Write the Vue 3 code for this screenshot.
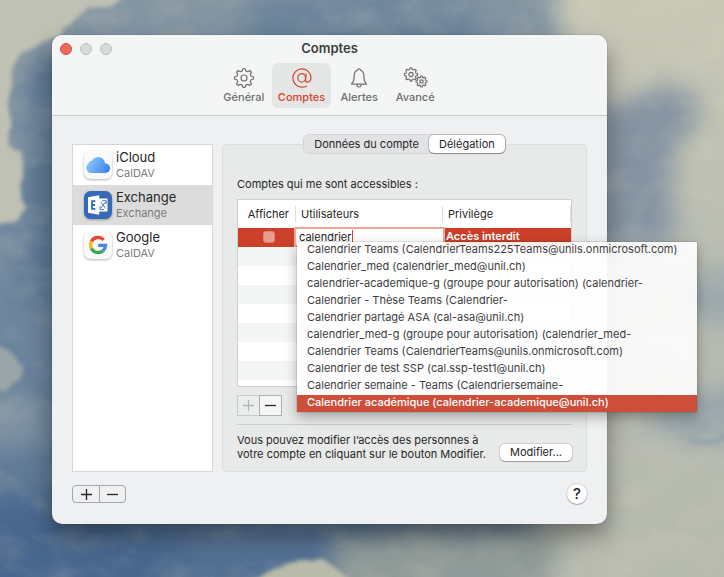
<script setup>
import { ref } from 'vue'

const gearPath = (cx, cy, r, teeth) => {
  const step = (Math.PI * 2) / teeth
  const inner = r * 0.8
  const point = (radius, angle) =>
    `${(cx + radius * Math.sin(angle)).toFixed(2)} ${(cy - radius * Math.cos(angle)).toFixed(2)}`
  let d = ''
  for (let i = 0; i < teeth; i++) {
    const a = i * step
    d += `${i ? 'L' : 'M'}${point(inner, a - step * 0.3)}`
    d += `L${point(r, a - step * 0.17)}`
    d += `Q${point(r * 1.04, a)} ${point(r, a + step * 0.17)}`
    d += `L${point(inner, a + step * 0.3)}`
    d += `Q${point(inner * 0.94, a + step * 0.5)} ${point(inner, a + step * 0.7)}`
  }
  return d + 'Z'
}

const gear = gearPath(12, 12, 9.3, 8)
const gearLarge = gearPath(8, 8.5, 6.6, 8)
const gearSmall = gearPath(18.5, 15.5, 5.4, 8)

const sections = [
  { id: 'general', label: 'Général' },
  { id: 'comptes', label: 'Comptes' },
  { id: 'alertes', label: 'Alertes' },
  { id: 'avance', label: 'Avancé' },
]
const section = ref('comptes')

const accounts = [
  { id: 'icloud', name: 'iCloud', kind: 'CalDAV' },
  { id: 'exchange', name: 'Exchange', kind: 'Exchange' },
  { id: 'google', name: 'Google', kind: 'CalDAV' },
]
const account = ref('exchange')

const tabs = ['Données du compte', 'Délégation']
const tab = ref('Délégation')

const query = ref('calendrier')
const suggestions = [
  'Calendrier Teams (CalendrierTeams225Teams@unils.onmicrosoft.com)',
  'Calendrier_med (calendrier_med@unil.ch)',
  'calendrier-academique-g (groupe pour autorisation) (calendrier-',
  'Calendrier - Thèse Teams (Calendrier-',
  'Calendrier partagé ASA (cal-asa@unil.ch)',
  'calendrier_med-g (groupe pour autorisation) (calendrier_med-',
  'Calendrier Teams (CalendrierTeams@unils.onmicrosoft.com)',
  'Calendrier de test SSP (cal.ssp-test1@unil.ch)',
  'Calendrier semaine - Teams (Calendriersemaine-',
  'Calendrier académique (calendrier-academique@unil.ch)',
]
const picked = ref(9)
</script>

<template>
  <div class="desktop">
    <svg class="wallpaper" viewBox="0 0 724 577" preserveAspectRatio="xMidYMid slice" aria-hidden="true">
      <defs>
        <linearGradient id="base" x1="0" y1="0" x2="0" y2="1">
          <stop offset="0" stop-color="#8495a2" />
          <stop offset="0.5" stop-color="#7188a0" />
          <stop offset="0.8" stop-color="#617b97" />
          <stop offset="1" stop-color="#506e92" />
        </linearGradient>
        <linearGradient id="sand" x1="0" y1="0" x2="0" y2="1">
          <stop offset="0" stop-color="#cccbb7" />
          <stop offset="0.5" stop-color="#b6bab1" />
          <stop offset="1" stop-color="#b8bbae" />
        </linearGradient>
        <filter id="soft" filterUnits="userSpaceOnUse" x="-80" y="-80" width="900" height="760" color-interpolation-filters="sRGB">
          <feGaussianBlur stdDeviation="13" />
        </filter>
        <filter id="edge" filterUnits="userSpaceOnUse" x="-40" y="-40" width="820" height="660" color-interpolation-filters="sRGB">
          <feTurbulence type="fractalNoise" baseFrequency="0.05" numOctaves="3" seed="4" result="n" />
          <feDisplacementMap in="SourceGraphic" in2="n" scale="8" xChannelSelector="R" yChannelSelector="G" />
          <feGaussianBlur stdDeviation="2" />
        </filter>
        <filter id="paint" filterUnits="userSpaceOnUse" x="0" y="0" width="724" height="577" color-interpolation-filters="sRGB">
          <feTurbulence type="fractalNoise" baseFrequency="0.02 0.03" numOctaves="5" seed="7" />
          <feColorMatrix values="0 0 0 0 0.88  0 0 0 0 0.87  0 0 0 0 0.76  1.6 0 0 0 -0.7" />
        </filter>
      </defs>
      <rect width="724" height="577" fill="url(#base)" />
      <g filter="url(#soft)">
        <path d="M556-60H820V660H430L470 560L560 500V80Z" fill="url(#sand)" />
        <path d="M330 540Q440 520 560 530L540 660H330Z" fill="#8f9a98" />
        <path d="M590 108Q640 98 665 84L702 100Q694 130 676 155Q664 190 678 240L590 255Z" fill="#8493a2" />
        <path d="M686 280Q730 268 790 276V318Q730 325 686 312ZM676 400L790 380V430Q720 455 640 425Z" fill="#93a1aa" />
        <path d="M250 0Q350-20 470 0L480 60H240Z" fill="#6c849b" />
        <path d="M-60 390Q20 390 60 420Q30 460-60 450Z" fill="#7f92a2" />
        <path d="M-60 520Q60 470 180 540V660H-60Z" fill="#48678e" />
        <path d="M30 60L60 45V330L20 300Z" fill="#5b7693" />
      </g>
      <rect width="724" height="577" filter="url(#paint)" opacity="0.25" />
      <g filter="url(#edge)">
        <path d="M-10-10H132L112 6L86 10L68 26L60 37L44 41L22 51L12 68L8 100L10 145L22 150L22 200L28 208L16 222L-10 224Z" fill="#bfc1b4" />
        <path d="M-10 340L6 348L24 366L20 380L4 392L-10 384Z" fill="#9aa5a7" />
        <path d="M236 590L276 568L300 560L318 558L340 570L362 590Z" fill="#b8bba9" />
        <path d="M690 440Q716 450 745 424" fill="none" stroke="#8c9dab" stroke-width="4" />
      </g>
    </svg>

    <main class="window">
      <header class="titlebar">
        <div class="lights">
          <button class="light close" aria-label="Fermer"></button>
          <button class="light" aria-label="Réduire"></button>
          <button class="light" aria-label="Agrandir"></button>
        </div>
        <h1>Comptes</h1>
        <nav class="sections">
          <button
            v-for="s in sections"
            :key="s.id"
            class="section"
            :class="{ active: section === s.id }"
            @click="section = s.id"
          >
            <svg width="26" height="24" viewBox="0 0 24 24" fill="none" stroke="currentColor" stroke-width="1.2" stroke-linejoin="round" stroke-linecap="round" aria-hidden="true">
              <template v-if="s.id === 'general'">
                <path :d="gear" />
                <circle cx="12" cy="12" r="3" />
              </template>
              <template v-else-if="s.id === 'comptes'">
                <ellipse cx="11.7" cy="11.9" rx="3.8" ry="4.3" />
                <path d="M16.2 7.8L15.6 13.7Q15.4 16.2 17.4 16.2Q21 16 21 11.3A9.1 9.1 0 1 0 12 21.1Q14.5 21.1 16.6 20.2" />
              </template>
              <template v-else-if="s.id === 'alertes'">
                <path d="M4.7 18.2H19.3Q19.4 17.3 18.3 16.3Q16.9 14.9 16.9 10.5Q16.9 5.1 13.7 4.3Q13.4 2.9 12 2.9T10.3 4.3Q7.1 5.1 7.1 10.5Q7.1 14.9 5.7 16.3Q4.6 17.3 4.7 18.2ZM9.8 18.5Q10 21 12 21T14.2 18.5" />
              </template>
              <template v-else>
                <path :d="gearLarge" />
                <circle cx="8" cy="8.5" r="2.2" />
                <path :d="gearSmall" />
                <circle cx="18.5" cy="15.5" r="1.7" />
              </template>
            </svg>
            <span>{{ s.label }}</span>
          </button>
        </nav>
      </header>

      <div class="content">
        <ul class="accounts">
          <li v-for="a in accounts" :key="a.id">
            <button class="account" :class="{ selected: account === a.id }" @click="account = a.id">
              <svg width="32" height="32" viewBox="0 0 32 32" class="logo" aria-hidden="true">
                <template v-if="a.id === 'icloud'">
                  <defs>
                    <linearGradient id="cloud" x1="0" x2="1" y1="0.3" y2="0.7">
                      <stop offset="0" stop-color="#8bc8fb" />
                      <stop offset="1" stop-color="#3f83ee" />
                    </linearGradient>
                  </defs>
                  <rect x="2" y="2" width="28" height="28" rx="6.5" fill="#fafafa" />
                  <path d="M9.2 24A5.2 5.2 0 0 1 6.5 14.6Q6.8 11.7 10 11.7Q12.3 8 16.4 8Q22 8.2 23 14.2Q28.1 15 28.1 19.1Q28 24 23 24Z" fill="url(#cloud)" />
                </template>
                <template v-else-if="a.id === 'exchange'">
                  <rect x="2" y="2" width="28" height="28" rx="6.5" fill="#3669b7" />
                  <path d="M17 9.5H25.5V22.5H17Z" fill="#fff" />
                  <path d="M6 8.2L17.2 6.2V25.8L6 23.8Z" fill="#fff" />
                  <path d="M13.4 12.2H10V19.9H13.4M10 16H13" fill="none" stroke="#3669b7" stroke-width="1.8" />
                  <path d="M18.6 12.8L23.6 19.4M23.6 12.8L18.6 19.4M20.2 11.7H24.2V15M22 20.6H18V17.2" fill="none" stroke="#3669b7" stroke-width="0.9" />
                </template>
                <template v-else>
                  <rect x="2" y="2" width="28" height="28" rx="6.5" fill="#fafafa" />
                  <g fill="none" stroke-width="3.4">
                    <path d="M21.6 10.8A7.5 7.5 0 0 0 9.4 12.6" stroke="#e94536" />
                    <path d="M9.4 12.6A7.5 7.5 0 0 0 9.4 19.4" stroke="#f6bb17" />
                    <path d="M9.4 19.4A7.5 7.5 0 0 0 21 21.7" stroke="#38a852" />
                    <path d="M21 21.7A7.5 7.5 0 0 0 23.5 16.4H16.2" stroke="#4b82f0" />
                  </g>
                </template>
              </svg>
              <span class="names">
                <span class="name">{{ a.name }}</span>
                <span class="kind">{{ a.kind }}</span>
              </span>
            </button>
          </li>
        </ul>

        <section class="panel">
          <div class="tabs" role="tablist">
            <button
              v-for="t in tabs"
              :key="t"
              class="tab"
              role="tab"
              :aria-selected="tab === t"
              :class="{ active: tab === t }"
              @click="tab = t"
            >{{ t }}</button>
          </div>

          <h2>Comptes qui me sont accessibles :</h2>

          <div class="grid">
            <table>
              <thead>
                <tr>
                  <th class="col-show"><span>Afficher</span></th>
                  <th class="col-user"><span>Utilisateurs</span></th>
                  <th><span>Privilège</span></th>
                </tr>
              </thead>
              <tbody>
                <tr>
                  <td class="show"><input type="checkbox" aria-label="Afficher" /></td>
                  <td class="user">
                    <input v-model="query" class="query" type="text" aria-label="Utilisateurs" />
                    <span class="caret" aria-hidden="true"></span>
                    <ul class="popover" role="listbox">
                      <li
                        v-for="(s, i) in suggestions"
                        :key="s"
                        role="option"
                        :aria-selected="picked === i"
                        :class="{ picked: picked === i }"
                        @mouseenter="picked = i"
                      >{{ s }}</li>
                    </ul>
                  </td>
                  <td class="right">Accès interdit</td>
                </tr>
              </tbody>
            </table>
            <div class="stripes"></div>
          </div>

          <div class="row-buttons">
            <button disabled aria-label="Ajouter un utilisateur">
              <svg width="11" height="11" viewBox="0 0 11 11" aria-hidden="true"><path d="M0 5.5H11M5.5 0V11" /></svg>
            </button>
            <button aria-label="Supprimer un utilisateur">
              <svg width="11" height="11" viewBox="0 0 11 11" aria-hidden="true"><path d="M0 5.5H11" /></svg>
            </button>
          </div>

          <footer class="note">
            <p>Vous pouvez modifier l’accès des personnes à votre compte en cliquant sur le bouton Modifier.</p>
            <button class="push">Modifier...</button>
          </footer>
        </section>
      </div>

      <div class="bottom">
        <div class="pair">
          <button aria-label="Ajouter un compte">
            <svg width="11" height="11" viewBox="0 0 11 11" aria-hidden="true"><path d="M0 5.5H11M5.5 0V11" /></svg>
          </button>
          <button aria-label="Supprimer un compte">
            <svg width="11" height="11" viewBox="0 0 11 11" aria-hidden="true"><path d="M0 5.5H11" /></svg>
          </button>
        </div>
        <button class="help">?</button>
      </div>
    </main>
  </div>
</template>

<style>
body {
  background: #66809a;
}
</style>

<style scoped>
* {
  box-sizing: border-box;
}
button,
input {
  font: inherit;
  color: inherit;
  margin: 0;
  padding: 0;
  border: 0;
  background: none;
}
ul {
  list-style: none;
  margin: 0;
  padding: 0;
}
.desktop {
  position: relative;
  min-height: 100vh;
  padding: 35px 117px 53px 52px;
  overflow: hidden;
  font-family: Inter, "Liberation Sans", sans-serif;
  font-size: 11px;
  line-height: 14px;
  color: #262626;
}
.wallpaper {
  position: absolute;
  inset: 0;
  width: 100%;
  height: 100%;
}
.window {
  position: relative;
  background: #eff0f2;
  border-radius: 10px;
  box-shadow: 0 0 1px rgba(0, 0, 0, 0.6), 0 12px 24px rgba(0, 0, 0, 0.4);
}
.titlebar {
  position: relative;
  height: 81px;
  display: flex;
  flex-direction: column;
  align-items: center;
  background: #f4f6f5;
  border-bottom: 1px solid #c9cccd;
  border-radius: 10px 10px 0 0;
}
.lights {
  position: absolute;
  left: 8px;
  top: 8px;
  display: flex;
  gap: 8px;
}
.light {
  width: 12px;
  height: 12px;
  border-radius: 50%;
  background: #d9dbda;
  border: 1px solid #bfc1c0;
}
.light.close {
  background: #ec6a5c;
  border-color: #d6503f;
}
h1 {
  margin: 5px 0 7px;
  font-size: 13px;
  line-height: 16px;
  font-weight: 600;
  color: #3c3d3d;
}
.sections {
  display: flex;
}
.section {
  display: flex;
  flex-direction: column;
  align-items: center;
  min-width: 56px;
  height: 45px;
  padding: 3px 6px 0;
  border-radius: 6px;
  font-weight: 500;
  color: #6e6f6f;
}
.section.active {
  background: #e5e7e6;
  color: #d8432b;
}
.content {
  display: flex;
  gap: 9px;
  padding: 28px 20px 0;
}
.accounts {
  flex: none;
  width: 141px;
  background: #fff;
  border: 1px solid #d5d6d8;
}
.account {
  display: flex;
  align-items: center;
  width: 100%;
  height: 40px;
  padding-left: 9px;
  gap: 2px;
  text-align: left;
}
.account.selected {
  background: #dcdcdc;
}
.logo {
  filter: drop-shadow(0 1px 1px rgba(0, 0, 0, 0.3));
}
.names {
  display: flex;
  flex-direction: column;
}
.name {
  font-size: 13px;
  line-height: 15px;
}
.kind {
  line-height: 16px;
  color: #7c7c7c;
}
.panel {
  flex: 1;
  min-width: 0;
  display: flex;
  flex-direction: column;
  padding: 0 14px 10px;
  background: #e8eae9;
  border: 1px solid #dcdedf;
  border-radius: 5px;
}
.tabs {
  align-self: center;
  display: flex;
  margin-top: -10px;
  background: #e1e2e4;
  border-radius: 5px;
  box-shadow: 0 0 0 1px #d3d5d6;
}
.tab {
  height: 18px;
  padding: 0 10px;
  border-radius: 5px;
}
.tab.active {
  background: #fff;
  box-shadow: 0 0 0 1px rgba(0, 0, 0, 0.15), 0 1px 1px rgba(0, 0, 0, 0.25);
}
h2 {
  margin: 24px 0 8px;
  font-size: 11px;
  line-height: 14px;
  font-weight: 400;
}
.grid {
  display: flex;
  flex-direction: column;
  background: #fff;
  border: 1px solid #cfd1d1;
}
table {
  width: 100%;
  table-layout: fixed;
  border-collapse: collapse;
}
th {
  height: 28px;
  padding: 6px 0;
  font-weight: 400;
  text-align: left;
}
th span {
  display: block;
  padding-left: 5px;
  line-height: 16px;
  border-right: 1px solid #dcdcdc;
}
.col-show {
  width: 58px;
}
.col-show span {
  padding: 0 6px 0 0;
  text-align: right;
}
.col-user {
  width: 147px;
}
td {
  height: 19px;
  padding: 0;
  vertical-align: top;
  line-height: 16px;
  background: #cb4028;
  color: #fff;
}
.show {
  padding: 3px 0 0 4px;
}
.show input {
  display: block;
  appearance: none;
  width: 12px;
  height: 12px;
  margin: 0 auto;
  border-radius: 3px;
  background: #e69d90;
  border: 1px solid #dc8575;
}
.user {
  position: relative;
  padding-top: 1px;
}
.query {
  display: block;
  width: 100%;
  height: 16px;
  padding: 0 3px;
  background: #fff;
  color: #262626;
  outline: 0;
  box-shadow: 0 0 0 2px #f2a698;
}
.caret {
  position: absolute;
  left: 56px;
  top: 2px;
  width: 1px;
  height: 12px;
  background: #e0402a;
}
.right {
  padding-left: 3px;
  font-weight: 600;
}
.stripes {
  height: 139px;
  background: repeating-linear-gradient(#f4f6f5 0 19px, #fff 19px 38px);
}
.popover {
  position: absolute;
  z-index: 2;
  left: 1px;
  top: 14px;
  width: 400px;
  background: rgba(255, 255, 255, 0.9);
  color: #3c3d3e;
  box-shadow: 0 0 1px rgba(0, 0, 0, 0.5), 0 5px 12px rgba(0, 0, 0, 0.3);
}
.popover li {
  height: 17px;
  padding-left: 10px;
  line-height: 15px;
  white-space: nowrap;
}
.popover .picked {
  background: #cd4f3a;
  color: #fff;
  font-weight: 500;
}
.row-buttons {
  display: flex;
  margin-top: 8px;
}
.row-buttons button {
  display: grid;
  place-items: center;
  width: 23px;
  height: 21px;
  border: 1px solid #adafaf;
  background: #f5f6f6;
}
.row-buttons button:disabled {
  width: 22px;
  border-color: #c9cbcb;
  border-right: 0;
  background: #ebedec;
  color: #b4b6b6;
}
.row-buttons path,
.pair path {
  stroke: currentColor;
  stroke-width: 1.3;
}
.note {
  display: flex;
  align-items: flex-end;
  justify-content: space-between;
  margin-top: 8px;
  padding-top: 8px;
  border-top: 1px solid #cdcfcf;
}
.note p {
  margin: 0;
  max-width: 256px;
}
.push {
  height: 17px;
  padding: 0 10px;
  line-height: 17px;
  border-radius: 5px;
  background: #fff;
  box-shadow: 0 0 0 1px rgba(0, 0, 0, 0.1), 0 1px 1px rgba(0, 0, 0, 0.25);
}
.bottom {
  display: flex;
  justify-content: space-between;
  align-items: center;
  padding: 12px 20px 20px;
}
.pair {
  display: flex;
  border: 1px solid #a3a5a6;
  border-radius: 4px;
}
.pair button {
  display: grid;
  place-items: center;
  width: 26px;
  height: 16px;
}
.pair button + button {
  border-left: 1px solid #a3a5a6;
}
.help {
  width: 20px;
  height: 20px;
  border-radius: 50%;
  background: #fff;
  font-size: 15px;
  font-weight: 500;
  box-shadow: 0 0 0 1px rgba(0, 0, 0, 0.08), 0 1px 1px rgba(0, 0, 0, 0.25);
}
</style>
